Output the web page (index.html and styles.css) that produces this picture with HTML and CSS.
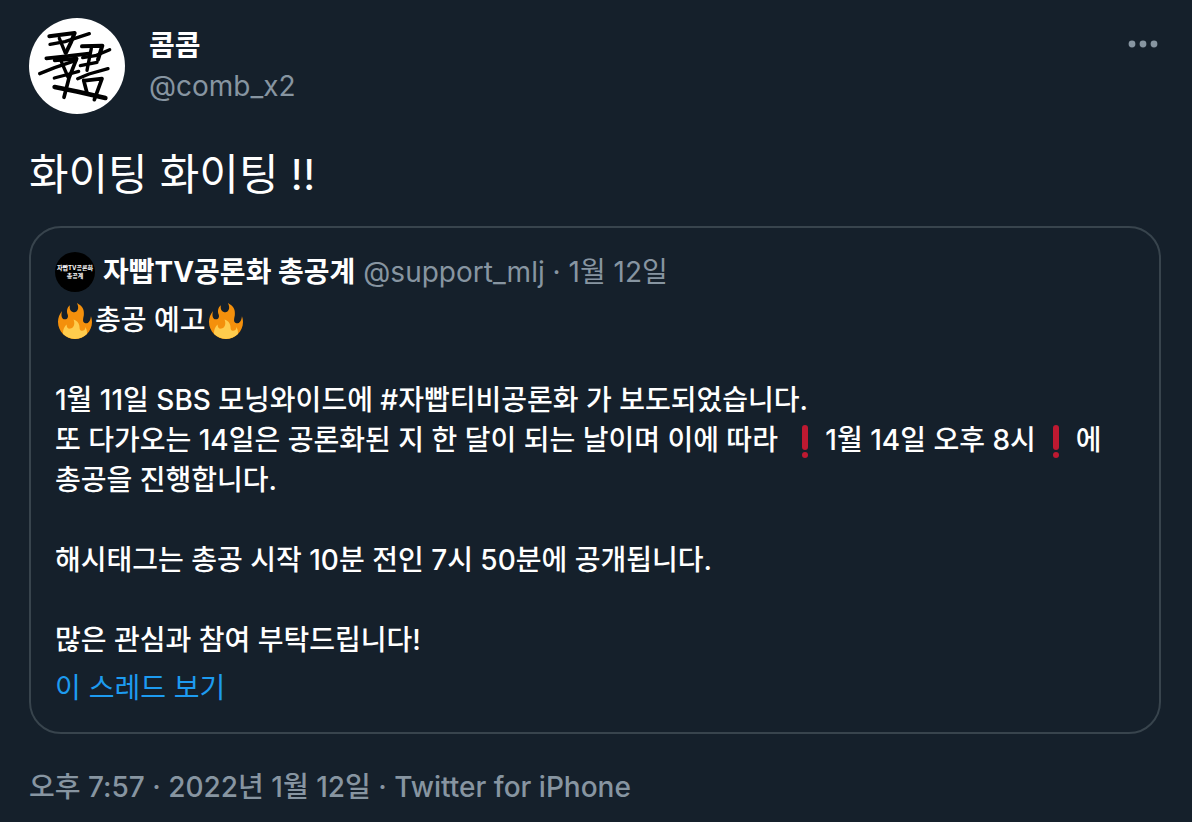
FILE: index.html
```html
<!DOCTYPE html>
<html lang="ko">

<head>
    <meta charset="UTF-8">
    <meta name="viewport" content="width=device-width, initial-scale=1.0">
    <title>콤콤</title>
    <link rel="stylesheet" href="styles.css">
</head>

<body>
    <!-- 이모지 -->
    <svg class="symbols" aria-hidden="true">
        <symbol id="fire" viewBox="0 0 36 36">
            <path fill="#F4900C" d="M35 19c0-2.062-.367-4.039-1.04-5.868-.46 5.389-3.333 8.157-6.335 6.868-2.812-1.208-.917-5.917-.777-8.164.236-3.809-.012-8.169-6.931-11.794 2.875 5.5.333 8.917-2.333 9.125-2.958.231-5.667-2.542-4.667-7.042-3.238 2.386-3.332 6.402-2.333 9 1.042 2.708-.042 4.958-2.583 5.208-2.84.28-4.418-3.041-2.963-8.333C2.52 10.965 1 14.805 1 19c0 9.389 7.611 17 17 17s17-7.611 17-17z"/>
            <path fill="#FFCC4D" d="M28.394 23.999c.148 3.084-2.561 4.293-4.019 3.709-2.106-.843-1.541-2.291-2.083-5.291s-2.625-5.083-5.708-6c2.25 6.333-1.247 8.667-3.08 9.084-1.872.426-3.753-.001-3.968-4.007C7.352 23.668 6 26.676 6 30c0 .368.023.73.055 1.09C9.125 34.124 13.342 36 18 36s8.875-1.876 11.945-4.91c.032-.36.055-.722.055-1.09 0-2.187-.584-4.236-1.606-6.001z"/>
        </symbol>
        <symbol id="exclamation" viewBox="0 0 36 36">
            <rect x="15" y="2" width="6" height="25" rx="3" fill="#BE1931"/>
            <circle cx="18" cy="32" r="3" fill="#BE1931"/>
        </symbol>
    </svg>

    <article class="tweet">
        <header class="tweet_header">
            <svg class="avatar" viewBox="3 3 288 288" role="img" aria-label="콤콤">
                <circle cx="147" cy="147" r="144" fill="#fff"/>
                <g fill="none" stroke="#000" stroke-width="10" stroke-linecap="round" stroke-linejoin="round">
                    <path d="M64 58l76-10-12 30-14 29" stroke-width="12"/>
                    <path d="M66 82l45-8 73-24"/>
                    <path d="M94 64l18 44"/>
                    <path d="M55 124l50-5 78-9" stroke-width="11"/>
                    <path d="M80 130l66-5-23 58-15 58" stroke-width="11"/>
                    <path d="M35 170l45-18 64-22"/>
                    <path d="M100 134l20 46M79 183l45-12 28-8"/>
                    <path d="M162 88l61-2-13 42" stroke-width="12"/>
                    <path d="M164 122l38-6 43-18"/>
                    <path d="M190 94l-13 66M157 146l50-10"/>
                    <path d="M149 185l34-14 57-16"/>
                    <path d="M80 210l70 14 82 19" stroke-width="14"/>
                    <path d="M167 190l10 38M170 191l52-6-23 63" stroke-width="11"/>
                </g>
            </svg>
            <div class="profile">
                <a class="name" href="#">콤콤</a>
                <a class="handle" href="#">@comb_x2</a>
            </div>
            <button class="more" type="button" aria-label="더 보기">
                <svg viewBox="0 0 30 8">
                    <circle cx="4" cy="4" r="3.4"/>
                    <circle cx="15" cy="4" r="3.4"/>
                    <circle cx="26" cy="4" r="3.4"/>
                </svg>
            </button>
        </header>

        <p class="tweet_text">화이팅 화이팅 !!</p>

        <!-- 인용 트윗 -->
        <section class="quote">
            <div class="quote_header">
                <div class="quote_avatar">자빱TV공론화<br>총공계</div>
                <a class="name" href="#">자빱TV공론화 총공계</a>
                <span class="handle">@support_mlj · 1월 12일</span>
            </div>
            <div class="quote_text">
                <p><svg class="emoji" role="img" aria-label="불"><use href="#fire"/></svg>총공 예고<svg class="emoji" role="img" aria-label="불"><use href="#fire"/></svg></p>
                <p>1월 11일 SBS 모닝와이드에 #자빱티비공론화 가 보도되었습니다.<br>또 다가오는 14일은 공론화된 지 한 달이 되는 날이며 이에 따라 <svg class="emoji" role="img" aria-label="느낌표"><use href="#exclamation"/></svg>1월 14일 오후 8시<svg class="emoji" role="img" aria-label="느낌표"><use href="#exclamation"/></svg>에 총공을 진행합니다.</p>
                <p>해시태그는 총공 시작 10분 전인 7시 50분에 공개됩니다.</p>
                <p>많은 관심과 참여 부탁드립니다!</p>
            </div>
            <a class="thread_link" href="#">이 스레드 보기</a>
        </section>

        <footer class="tweet_footer">오후 7:57 · 2022년 1월 12일 · Twitter for iPhone</footer>
    </article>
</body>

</html>
```

FILE: styles.css
```css
* {
    box-sizing: border-box;
    margin: 0;
    padding: 0;
}

body {
    background-color: #15202b;
    color: #ffffff;
    font-family: Inter, "Noto Sans CJK KR", sans-serif;
    font-size: 28px;
    font-weight: 500;
    line-height: 40px;
    word-break: keep-all;
}

a {
    color: inherit;
    text-decoration: none;
}

a:hover {
    text-decoration: underline;
}

.symbols {
    display: none;
}

.tweet {
    padding: 18px 31px 16px 29px;
}

/* 작성자 */
.tweet_header {
    display: flex;
    align-items: flex-start;
    gap: 24px;
}

.avatar {
    width: 96px;
    height: 96px;
    flex-shrink: 0;
}

.profile {
    display: flex;
    flex-direction: column;
    flex: 1;
    padding-top: 8px;
}

.name {
    font-weight: 700;
}

.handle {
    color: #8795a1;
    font-weight: 400;
}

.more {
    display: flex;
    padding: 22px 3px;
    border: none;
    background: none;
    cursor: pointer;
}

.more svg {
    width: 30px;
    height: 8px;
    fill: #8795a1;
}

.tweet_text {
    margin: 30px 0 22px;
    font-size: 43px;
    font-weight: 400;
    line-height: 60px;
}

/* 인용 트윗 */
.quote {
    padding: 24px;
    border: 2px solid #38444d;
    border-radius: 32px;
}

.quote_header {
    display: flex;
    align-items: center;
    gap: 8px;
    margin-bottom: 8px;
}

.quote_avatar {
    display: flex;
    align-items: center;
    justify-content: center;
    width: 40px;
    height: 40px;
    border-radius: 50%;
    background-color: #000000;
    font-size: 6px;
    font-weight: 700;
    line-height: 8px;
    text-align: center;
    white-space: nowrap;
}

.quote_text {
    display: flex;
    flex-direction: column;
    gap: 40px;
    margin-bottom: 8px;
}

.emoji {
    width: 36px;
    height: 36px;
    margin: 0 2px;
    vertical-align: -9px;
}

.thread_link {
    display: block;
    color: #1d9bf0;
    font-weight: 400;
}

.tweet_footer {
    margin-top: 33px;
    color: #8795a1;
}
```
